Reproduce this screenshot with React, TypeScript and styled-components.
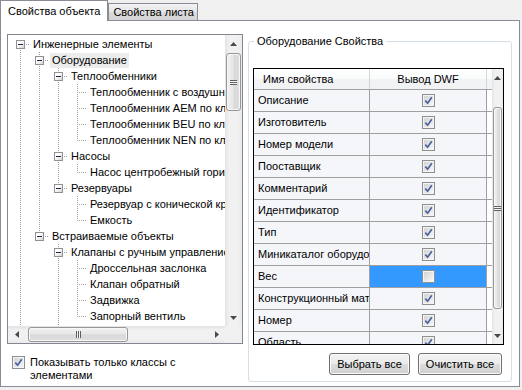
import React from 'react'
import styled, { createGlobalStyle, css } from 'styled-components'

const GlobalStyle = createGlobalStyle`
  * { box-sizing: border-box; }
  html, body { margin: 0; padding: 0; background: #f0f0f0; }
  body {
    font-family: "Liberation Sans", Arial, sans-serif;
    font-size: 11px;
    color: #000;
  }
`

const dotsV = 'repeating-linear-gradient(to bottom, #a0a0a0 0 1px, transparent 1px 2px)'
const dotsH = 'repeating-linear-gradient(to right, #a0a0a0 0 1px, transparent 1px 2px)'

const Dialog = styled.div`
  width: 522px;
  height: 390px;
  padding: 0 2px 4px 0;
  display: flex;
  flex-direction: column;
`

const TabStrip = styled.div`
  display: flex;
  align-items: flex-end;
  height: 20px;
`

const Tab = styled.div<{ $active?: boolean }>`
  display: flex;
  align-items: center;
  white-space: nowrap;
  border: 1px solid #898c95;
  border-bottom: none;
  ${p => p.$active
    ? css`
        height: 21px;
        padding: 0 7px;
        margin-bottom: -1px;
        background: #fff;
        position: relative;
        z-index: 1;
      `
    : css`
        height: 17px;
        padding: 0 3px 0 4px;
        background: linear-gradient(#f3f3f3, #e6e6e6 50%, #dadada 51%, #d4d4d4);
      `}
`

const Panel = styled.div`
  flex: 1;
  display: flex;
  gap: 5px;
  padding: 13px 7px 4px 6px;
  background: #fff;
  border: 1px solid #898c95;
`

const LeftColumn = styled.div`
  width: 236px;
  flex: none;
  display: flex;
  flex-direction: column;
`

const TreeBox = styled.div`
  height: 310px;
  display: grid;
  grid-template-columns: 1fr 17px;
  grid-template-rows: 1fr 17px;
  border: 1px solid #828790;
  background: #fff;
`

const TreeView = styled.div`
  overflow: hidden;
  padding: 1px 0 0 3px;
`

const Corner = styled.div`
  background: #f0f0f0;
`

const TreeRow = styled.div`
  display: flex;
  height: 16px;
  align-items: center;
`

const Guide = styled.span<{ $on: boolean }>`
  flex: none;
  width: 19px;
  height: 16px;
  background: ${p => (p.$on ? `${dotsV} 9px 0 / 1px 100% no-repeat` : 'none')};
`

const Joint = styled.span<{ $up: boolean; $down: boolean }>`
  flex: none;
  width: 19px;
  height: 16px;
  display: flex;
  align-items: flex-start;
  justify-content: center;
  padding-top: 4px;
  background-image: ${dotsH}, ${p => (p.$up ? dotsV : 'none')}, ${p => (p.$down ? dotsV : 'none')};
  background-repeat: no-repeat;
  background-size: 10px 1px, 1px 8px, 1px 8px;
  background-position: 9px 8px, 9px 0, 9px 8px;
`

const Expander = styled.span`
  width: 9px;
  height: 9px;
  display: flex;
  align-items: center;
  justify-content: center;
  border: 1px solid #919191;
  background: linear-gradient(135deg, #ffffff 35%, #d4d4d4);

  &::after {
    content: '';
    width: 5px;
    height: 1px;
    background: #1c2a48;
  }
`

const NodeLabel = styled.span<{ $selected?: boolean }>`
  margin-left: 1px;
  padding: 0 2px;
  line-height: 15px;
  white-space: nowrap;
  background: ${p => (p.$selected ? '#ececec' : 'transparent')};
`

const CheckRow = styled.label`
  display: flex;
  align-items: flex-start;
  gap: 5px;
  margin: 12px 0 0 5px;
`

const CheckText = styled.span`
  width: 165px;
  line-height: 13px;
`

const Box = styled.span`
  flex: none;
  width: 13px;
  height: 13px;
  display: flex;
  align-items: center;
  justify-content: center;
  border: 1px solid #8e8f8f;
  box-shadow: inset 0 0 0 1px #f4f4f4;
  background: linear-gradient(135deg, #cfcfcf, #f4f4f4 85%);
`

const Group = styled.fieldset`
  flex: 1;
  min-width: 0;
  margin: 1px 0 0;
  padding: 20px 7px 5px 4px;
  display: flex;
  flex-direction: column;
  border: 1px solid #d5dfe5;
  border-radius: 3px;
`

const GroupTitle = styled.legend`
  margin-left: 1px;
  padding: 0 3px;
  line-height: 13px;
`

const Grid = styled.div`
  height: 277px;
  flex: none;
  display: flex;
  border: 1px solid #000;
  background: #fff;
`

const GridTable = styled.div`
  flex: 1;
  min-width: 0;
  display: flex;
  flex-direction: column;
  overflow: hidden;
`

const HeadRow = styled.div`
  display: flex;
  flex: none;
  height: 21px;
  border-bottom: 1px solid #a0a0a0;
  background: linear-gradient(#ffffff, #f9fafb 50%, #f2f3f5 51%, #f1f2f4);
`

const HeadCell = styled.div<{ $w: number; $center?: boolean }>`
  width: ${p => p.$w}px;
  flex: none;
  display: flex;
  align-items: center;
  justify-content: ${p => (p.$center ? 'center' : 'flex-start')};
  padding-left: ${p => (p.$center ? 0 : 9)}px;
  border-right: 1px solid #d5d5d5;
  white-space: nowrap;
  line-height: 13px;
`

const DataRow = styled.div`
  display: flex;
  flex: none;
  height: 22px;
  border-bottom: 1px solid #a0a0a0;
`

const Cell = styled.div<{ $w: number; $center?: boolean; $current?: boolean }>`
  width: ${p => p.$w}px;
  flex: none;
  display: flex;
  align-items: center;
  justify-content: ${p => (p.$center ? 'center' : 'flex-start')};
  padding-left: ${p => (p.$center ? 0 : 4)}px;
  overflow: hidden;
  white-space: nowrap;
  line-height: 13px;
  border-right: 1px solid #a0a0a0;
  background: ${p => (p.$current ? '#3399ff' : '#f4f6fa')};
`

const ButtonRow = styled.div`
  display: flex;
  justify-content: flex-end;
  gap: 8px;
  margin-top: 8px;
  padding-right: 2px;
`

const Button = styled.button<{ $w: number }>`
  width: ${p => p.$w}px;
  height: 22px;
  padding: 0;
  font: inherit;
  color: #000;
  border: 1px solid #707070;
  border-radius: 3px;
  box-shadow: inset 0 0 0 1px #fbfbfb;
  background: linear-gradient(#f2f2f2, #ebebeb 50%, #dddddd 51%, #cfcfcf);
`

type Dir = 'v' | 'h'

const Bar = styled.div<{ $dir: Dir }>`
  display: flex;
  flex-direction: ${p => (p.$dir === 'v' ? 'column' : 'row')};
  background: ${p =>
    p.$dir === 'v'
      ? 'linear-gradient(to right, #e3e3e3, #f1f1f1 25%, #f1f1f1 75%, #eaeaea)'
      : 'linear-gradient(to bottom, #e3e3e3, #f1f1f1 25%, #f1f1f1 75%, #eaeaea)'};
`

const Arrow = styled.div<{ $dir: Dir }>`
  flex: none;
  ${p => (p.$dir === 'v' ? 'height: 17px;' : 'width: 17px;')}
  display: flex;
  align-items: center;
  justify-content: center;
`

const Track = styled.div<{ $dir: Dir }>`
  flex: 1;
  display: flex;
  flex-direction: ${p => (p.$dir === 'v' ? 'column' : 'row')};
`

const Thumb = styled.div<{ $dir: Dir; $start: number; $size: number }>`
  flex: none;
  ${p =>
    p.$dir === 'v'
      ? css`margin: ${p.$start}px 1px 0; height: ${p.$size}px;`
      : css`margin: 1px 0 1px ${p.$start}px; width: ${p.$size}px;`}
  display: flex;
  align-items: center;
  justify-content: center;
  border: 1px solid #979797;
  border-radius: 3px;
  box-shadow: inset 0 0 0 1px #f7f7f7;
  background: ${p =>
    p.$dir === 'v'
      ? 'linear-gradient(to right, #f2f2f2, #e7e7e7 45%, #d9d9d9 55%, #dedede)'
      : 'linear-gradient(to bottom, #f2f2f2, #e7e7e7 45%, #d9d9d9 55%, #dedede)'};
`

const Grip = styled.span<{ $dir: Dir }>`
  width: ${p => (p.$dir === 'v' ? 7 : 5)}px;
  height: ${p => (p.$dir === 'v' ? 5 : 7)}px;
  background: repeating-linear-gradient(
    to ${p => (p.$dir === 'v' ? 'bottom' : 'right')},
    #5f5f5f 0 1px,
    #f4f4f4 1px 2px
  );
`

const arrowPaths: Record<string, { w: number; h: number; d: string }> = {
  up: { w: 7, h: 4, d: 'M0 4L3.5 0L7 4Z' },
  down: { w: 7, h: 4, d: 'M0 0H7L3.5 4Z' },
  left: { w: 4, h: 7, d: 'M4 0V7L0 3.5Z' },
  right: { w: 4, h: 7, d: 'M0 0L4 3.5L0 7Z' },
}

function ArrowGlyph({ to }: { to: keyof typeof arrowPaths }) {
  const a = arrowPaths[to]
  return (
    <svg width={a.w} height={a.h} viewBox={`0 0 ${a.w} ${a.h}`}>
      <path d={a.d} fill="#4a4a4a" />
    </svg>
  )
}

function ScrollBar({ dir, start, size }: { dir: Dir; start: number; size: number }) {
  return (
    <Bar $dir={dir}>
      <Arrow $dir={dir}><ArrowGlyph to={dir === 'v' ? 'up' : 'left'} /></Arrow>
      <Track $dir={dir}>
        <Thumb $dir={dir} $start={start} $size={size}><Grip $dir={dir} /></Thumb>
      </Track>
      <Arrow $dir={dir}><ArrowGlyph to={dir === 'v' ? 'down' : 'right'} /></Arrow>
    </Bar>
  )
}

function Check({ on }: { on: boolean }) {
  return (
    <Box>
      {on && (
        <svg width="9" height="9" viewBox="0 0 9 9">
          <path d="M1.3 4.6L3.6 7.2L7.8 1.2" fill="none" stroke="#4a62a0" strokeWidth="1.7" />
        </svg>
      )}
    </Box>
  )
}

type TreeNode = { label: string; selected?: boolean; children?: TreeNode[] }

const tree: TreeNode[] = [
  {
    label: 'Инженерные элементы',
    children: [
      {
        label: 'Оборудование',
        selected: true,
        children: [
          {
            label: 'Теплообменники',
            children: [
              { label: 'Теплообменник с воздушным охлаждением' },
              { label: 'Теплообменник AEM по классу TEMA' },
              { label: 'Теплообменник BEU по классу TEMA' },
              { label: 'Теплообменник NEN по классу TEMA' },
            ],
          },
          { label: 'Насосы', children: [{ label: 'Насос центробежный горизонтальный' }] },
          {
            label: 'Резервуары',
            children: [{ label: 'Резервуар с конической крышкой' }, { label: 'Емкость' }],
          },
        ],
      },
      {
        label: 'Встраиваемые объекты',
        children: [
          {
            label: 'Клапаны с ручным управлением',
            children: [
              { label: 'Дроссельная заслонка' },
              { label: 'Клапан обратный' },
              { label: 'Задвижка' },
              { label: 'Запорный вентиль' },
            ],
          },
          { label: 'Клапаны с приводом', children: [{ label: 'Клапан регулирующий' }] },
        ],
      },
    ],
  },
  { label: 'Трубопроводы', children: [{ label: 'Трубы' }] },
]

type FlatRow = {
  label: string
  guides: boolean[]
  up: boolean
  down: boolean
  expandable: boolean
  selected?: boolean
}

const flatten = (nodes: TreeNode[], guides: boolean[] = []): FlatRow[] =>
  nodes.flatMap((n, i) => {
    const hasNext = i < nodes.length - 1
    const row: FlatRow = {
      label: n.label,
      guides,
      up: guides.length > 0 || i > 0,
      down: hasNext,
      expandable: !!n.children?.length,
      selected: n.selected,
    }
    return [row, ...(n.children ? flatten(n.children, [...guides, hasNext]) : [])]
  })

const treeRows = flatten(tree)

const properties = [
  { name: 'Описание', on: true },
  { name: 'Изготовитель', on: true },
  { name: 'Номер модели', on: true },
  { name: 'Пооставщик', on: true },
  { name: 'Комментарий', on: true },
  { name: 'Идентификатор', on: true },
  { name: 'Тип', on: true },
  { name: 'Миникаталог оборудования', on: true },
  { name: 'Вес', on: false, current: true },
  { name: 'Конструкционный материал', on: true },
  { name: 'Номер', on: true },
  { name: 'Область', on: true },
]

export default function App() {
  return (
    <>
      <GlobalStyle />
      <Dialog>
        <TabStrip>
          <Tab $active>Свойства объекта</Tab>
          <Tab>Свойства листа</Tab>
        </TabStrip>
        <Panel>
          <LeftColumn>
            <TreeBox>
              <TreeView>
                {treeRows.map((r, i) => (
                  <TreeRow key={i}>
                    {r.guides.map((g, j) => <Guide key={j} $on={g} />)}
                    <Joint $up={r.up} $down={r.down}>{r.expandable && <Expander />}</Joint>
                    <NodeLabel $selected={r.selected}>{r.label}</NodeLabel>
                  </TreeRow>
                ))}
              </TreeView>
              <ScrollBar dir="v" start={1} size={58} />
              <ScrollBar dir="h" start={3} size={100} />
              <Corner />
            </TreeBox>
            <CheckRow>
              <Check on />
              <CheckText>Показывать только классы с элементами</CheckText>
            </CheckRow>
          </LeftColumn>
          <Group>
            <GroupTitle>Оборудование Свойства</GroupTitle>
            <Grid>
              <GridTable>
                <HeadRow>
                  <HeadCell $w={116}>Имя свойства</HeadCell>
                  <HeadCell $w={117} $center>Вывод DWF</HeadCell>
                </HeadRow>
                {properties.map(p => (
                  <DataRow key={p.name}>
                    <Cell $w={116}>{p.name}</Cell>
                    <Cell $w={117} $center $current={p.current}><Check on={p.on} /></Cell>
                  </DataRow>
                ))}
              </GridTable>
              <ScrollBar dir="v" start={21} size={202} />
            </Grid>
            <ButtonRow>
              <Button $w={81}>Выбрать все</Button>
              <Button $w={84}>Очистить все</Button>
            </ButtonRow>
          </Group>
        </Panel>
      </Dialog>
    </>
  )
}
